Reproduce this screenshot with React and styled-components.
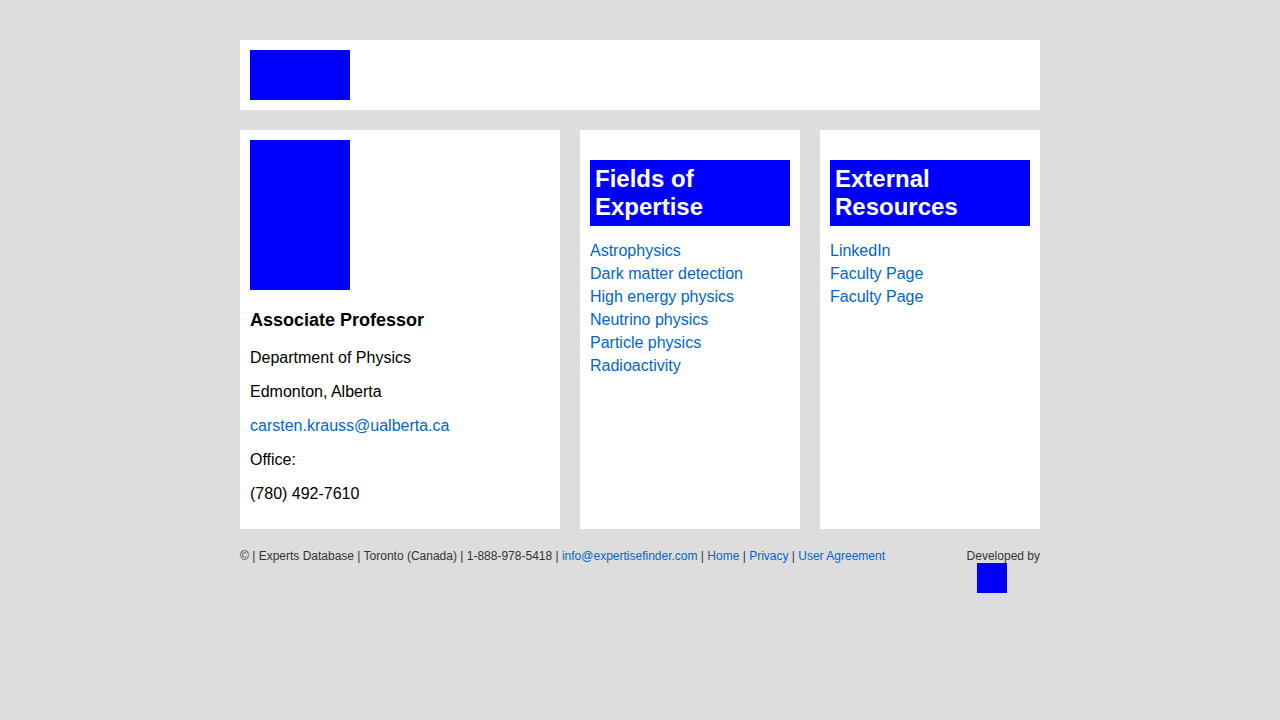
import React from 'react'
import styled, { createGlobalStyle } from 'styled-components';

const GlobalStyle = createGlobalStyle`
  html, body {
    margin: 0;
    padding: 0;
    background: #dddddd;
    font-family: "Liberation Sans", Arial, sans-serif;
  }
  a {
    color: #0066cc;
    text-decoration: none;
  }
`;

const fields = [
  'Astrophysics',
  'Dark matter detection',
  'High energy physics',
  'Neutrino physics',
  'Particle physics',
  'Radioactivity'
];

const resources = ['LinkedIn', 'Faculty Page', 'Faculty Page'];

function App() {
  return (
    <>
      <GlobalStyle />
      <Page>
        <Header>
          <Logo />
        </Header>
        <Columns>
          <Card>
            <Photo />
            <Title>Associate Professor</Title>
            <Line>Department of Physics</Line>
            <Line>Edmonton, Alberta</Line>
            <Line><a href="#">carsten.krauss@ualberta.ca</a></Line>
            <Line>Office:</Line>
            <Line>(780) 492-7610</Line>
          </Card>
          <Card>
            <SectionTitle>Fields of Expertise</SectionTitle>
            <LinkList>
              {fields.map((f, i) => <li key={i}><a href="#">{f}</a></li>)}
            </LinkList>
          </Card>
          <Card>
            <SectionTitle>External Resources</SectionTitle>
            <LinkList>
              {resources.map((r, i) => <li key={i}><a href="#">{r}</a></li>)}
            </LinkList>
          </Card>
        </Columns>
        <Footer>
          <FooterText>
            © | Experts Database | Toronto (Canada) | 1-888-978-5418 | <a href="#">info@expertisefinder.com</a> | <a href="#">Home</a> | <a href="#">Privacy</a> | <a href="#">User Agreement</a>
          </FooterText>
          <DevBlock>
            Developed by
            <DevLogo />
          </DevBlock>
        </Footer>
      </Page>
    </>
  )
}

const Page = styled.div`
  width: 800px;
  margin: 0 auto;
  padding-top: 40px;
`;
const Header = styled.div`
  background: #fff;
  padding: 10px;
  height: 50px;
`;
const Logo = styled.div`
  width: 100px;
  height: 50px;
  background: #0000ff;
`;
const Columns = styled.div`
  display: grid;
  grid-template-columns: 320px 220px 220px;
  gap: 20px;
  margin-top: 20px;
  height: 399px;
`;
const Card = styled.div`
  background: #fff;
  padding: 10px;
  box-sizing: border-box;
`;
const Photo = styled.div`
  width: 100px;
  height: 150px;
  background: #0000ff;
`;
const Title = styled.h3`
  font-size: 18px;
  font-weight: bold;
  margin: 20px 0 18px;
  line-height: 21px;
  color: #000;
`;
const Line = styled.p`
  font-size: 16px;
  line-height: 18px;
  margin: 16px 0 0;
  color: #000;
`;
const SectionTitle = styled.h2`
  background: #0000ff;
  color: #fff;
  font-size: 24px;
  line-height: 28px;
  padding: 5px;
  margin: 20px 0 0;
  font-weight: bold;
`;
const LinkList = styled.ul`
  list-style: none;
  padding: 0;
  margin: 13px 0 0;
  font-size: 16px;
  line-height: 23px;
`;
const Footer = styled.div`
  display: flex;
  justify-content: space-between;
  margin-top: 20px;
  font-size: 12px;
  line-height: 14px;
  color: #333;
`;
const FooterText = styled.div``;
const DevBlock = styled.div`
  display: flex;
  flex-direction: column;
  align-items: flex-end;
`;
const DevLogo = styled.div`
  width: 30px;
  height: 30px;
  background: #0000ff;
  margin-right: 33px;
`;

export default App;
